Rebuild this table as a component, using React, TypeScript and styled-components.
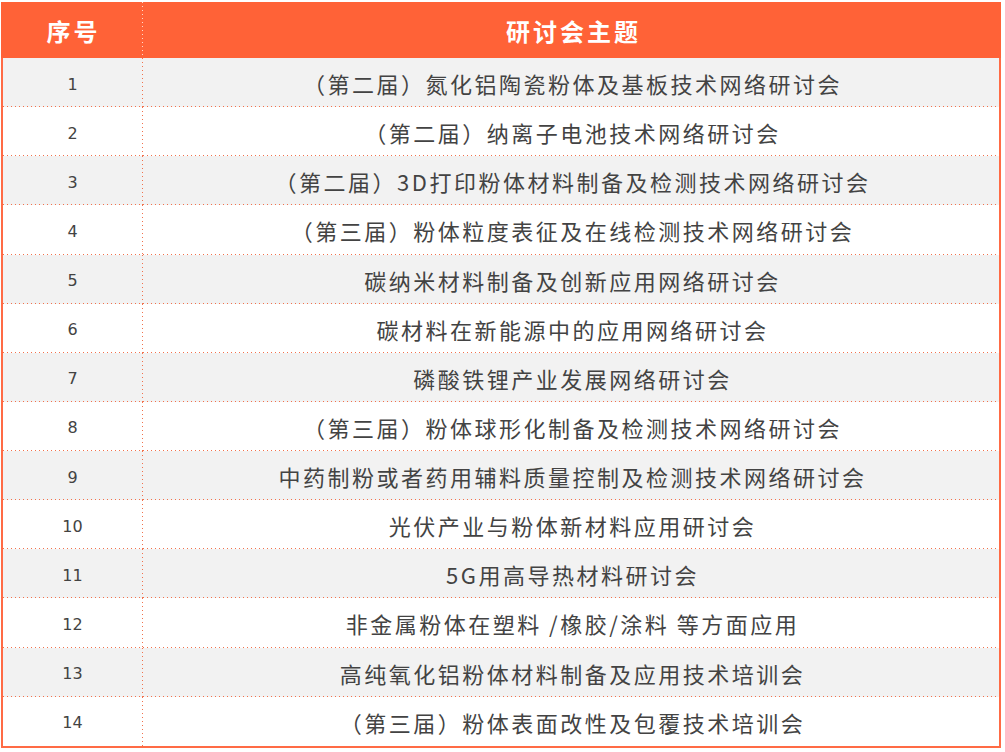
import React, { ReactElement } from 'react';
import styled, { createGlobalStyle } from 'styled-components';

const GlobalStyle = createGlobalStyle`
  html, body {
    margin: 0;
    padding: 0;
    background: #fff;
  }
`;

const Page = styled.div`
  padding: 2px 4px 0 1px;
`;

const Table = styled.div`
  border: solid 2px #ff6b45;
  border-top: none;
  display: grid;
  grid-template-columns: 140px 1fr;
  grid-template-rows: 56px;
  grid-auto-rows: 49.14px;
  width: 996px;
`;

const HeadCell = styled.div<{ $divider?: boolean }>`
  align-items: center;
  background-color: #ff6237;
  background-image: ${(p) =>
    p.$divider ? 'linear-gradient(to bottom, #ffd9cc 1px, transparent 1px)' : 'none'};
  background-position: right top;
  background-repeat: repeat-y;
  background-size: 1px 4px;
  color: #fff;
  display: flex;
  font-family: "Noto Sans CJK SC", "Noto Sans", sans-serif;
  font-size: 24px;
  font-weight: 700;
  justify-content: center;
  letter-spacing: 3px;
  margin: 0 -2px;
  padding-left: 3px;
  padding-top: 1px;
`;

const HeadNo = styled(HeadCell)`
  margin-right: 0;
`;

const HeadTopic = styled(HeadCell)`
  margin-left: 0;
`;

const Cell = styled.div<{ $striped: boolean; $last: boolean; $divider?: boolean }>`
  align-items: center;
  background-color: ${(p) => (p.$striped ? '#f2f2f2' : '#fff')};
  background-image: ${(p) =>
    [
      p.$last ? null : 'linear-gradient(to right, #f2714c 1px, transparent 1px)',
      p.$divider ? 'linear-gradient(to bottom, #f2714c 1px, transparent 1px)' : null,
    ]
      .filter(Boolean)
      .join(', ') || 'none'};
  background-position: ${(p) =>
    [p.$last ? null : 'left bottom', p.$divider ? 'right top' : null].filter(Boolean).join(', ') ||
    '0 0'};
  background-repeat: ${(p) =>
    [p.$last ? null : 'repeat-x', p.$divider ? 'repeat-y' : null].filter(Boolean).join(', ') ||
    'no-repeat'};
  background-size: ${(p) =>
    [p.$last ? null : '4px 1px', p.$divider ? '1px 4px' : null].filter(Boolean).join(', ') ||
    'auto'};
  color: #434343;
  display: flex;
  justify-content: center;
`;

const NoCell = styled(Cell)`
  font-family: "DejaVu Sans", Verdana, sans-serif;
  font-size: 16px;
  padding-right: 1px;
  padding-top: 3px;
`;

const TopicCell = styled(Cell)`
  font-family: "Noto Sans CJK SC", "Noto Sans", sans-serif;
  font-size: 22px;
  letter-spacing: 2.5px;
  padding-left: 3px;
  padding-top: 1px;
`;

const topics = [
  '（第二届）氮化铝陶瓷粉体及基板技术网络研讨会',
  '（第二届）纳离子电池技术网络研讨会',
  '（第二届）3D打印粉体材料制备及检测技术网络研讨会',
  '（第三届）粉体粒度表征及在线检测技术网络研讨会',
  '碳纳米材料制备及创新应用网络研讨会',
  '碳材料在新能源中的应用网络研讨会',
  '磷酸铁锂产业发展网络研讨会',
  '（第三届）粉体球形化制备及检测技术网络研讨会',
  '中药制粉或者药用辅料质量控制及检测技术网络研讨会',
  '光伏产业与粉体新材料应用研讨会',
  '5G用高导热材料研讨会',
  '非金属粉体在塑料 /橡胶/涂料 等方面应用',
  '高纯氧化铝粉体材料制备及应用技术培训会',
  '（第三届）粉体表面改性及包覆技术培训会',
];

export default function App(): ReactElement {
  return (
    <Page>
      <GlobalStyle />
      <Table>
        <HeadNo $divider>序号</HeadNo>
        <HeadTopic>研讨会主题</HeadTopic>
        {topics.map((topic, i) => {
          const striped = i % 2 === 0;
          const last = i === topics.length - 1;
          return (
            <React.Fragment key={topic}>
              <NoCell $striped={striped} $last={last} $divider>
                {i + 1}
              </NoCell>
              <TopicCell $striped={striped} $last={last}>
                {topic}
              </TopicCell>
            </React.Fragment>
          );
        })}
      </Table>
    </Page>
  );
}
